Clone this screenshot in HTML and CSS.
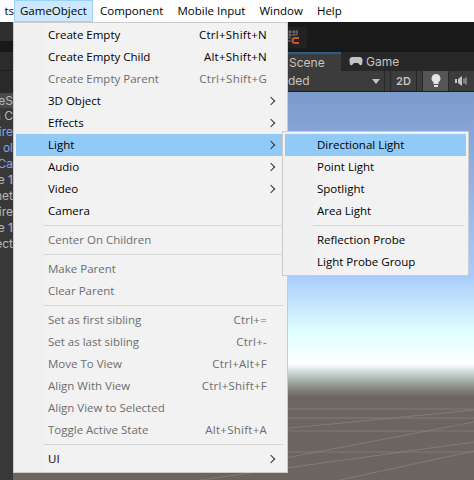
FILE: index.html
```html
<!DOCTYPE html>
<html>
<head>
    <title>GameObject menu</title>
    <meta charset="UTF-8">
    <link rel="stylesheet" href="styles.css">
</head>
<body>
    <div id="menubar">
        <span class="bar_item cut">ts</span>
        <span class="bar_item open">GameObject</span>
        <span class="bar_item">Component</span>
        <span class="bar_item">Mobile Input</span>
        <span class="bar_item">Window</span>
        <span class="bar_item">Help</span>
    </div>
    <div id="editor">
        <div id="toolbar">
            <div class="tool_left"></div>
            <div class="snap">
                <svg width="14" height="16" viewBox="0 0 14 16"><path d="M5 1v7M9 1v5M12 1v5M3 3h10M3 6h9M3 9h3M3 12h3" stroke="#777" fill="none"/><path d="M14 9H10a2.500 2.500 0 0 0 0 5h4" stroke="#c8562a" stroke-width="2" fill="none"/></svg>
            </div>
        </div>
        <div id="work">
            <div id="hierarchy">
                <div class="h_tab"></div>
                <div class="h_search"></div>
                <div class="h_row head">eS</div>
                <div class="h_row">n C</div>
                <div class="h_row blue">hire</div>
                <div class="h_row blue">ol</div>
                <div class="h_row blue">Ca</div>
                <div class="h_row">e 1</div>
                <div class="h_row">net</div>
                <div class="h_row">ire</div>
                <div class="h_row">e 1</div>
                <div class="h_row">ect</div>
            </div>
            <div id="scene_panel">
                <div id="tabs">
                    <span class="tab active">Scene</span>
                    <span class="tab">
                        <svg width="14" height="9" viewBox="0 0 14 9"><path d="M3.500 0h7a3 3 0 0 1 3 3.500l-.4 3.500a1.500 1.500 0 0 1-2.700.6L9 6H5L3.600 7.600A1.500 1.500 0 0 1 .9 7L.5 3.500a3 3 0 0 1 3-3.500z" fill="#c4c4c4"/></svg>
                        Game
                    </span>
                </div>
                <div id="scene_tools">
                    <span class="shaded">ded</span>
                    <span class="caret"></span>
                    <span class="tool gap"></span>
                    <span class="tool twod">2D</span>
                    <span class="tool gap"></span>
                    <span class="tool on">
                        <svg width="10" height="16" viewBox="0 0 10 16"><path d="M5 1a4.500 4.500 0 0 0-2.500 8.200V11h5V9.200A4.500 4.500 0 0 0 5 1z" fill="#e4e4e4"/><rect x="3" y="12" width="4" height="2" fill="#e4e4e4"/></svg>
                    </span>
                    <span class="tool last">
                        <svg width="14" height="12" viewBox="0 0 14 12"><path d="M0 4h2v4H0zM3 4l4-3v10L3 8z" fill="#c4c4c4"/><path d="M9 3.500v5M11 2.500v7" stroke="#c4c4c4" fill="none"/></svg>
                    </span>
                </div>
                <div id="sky">
                    <svg class="grid" width="474" height="85" viewBox="0 0 474 85">
                        <path d="M0 57H474M0 36H474M0 23H474M0 14H474M280 64L474 27M200 85L474 47M340 85L474 56M280 34L474 15" stroke="#8a8580" fill="none" opacity="0.7"/>
                    </svg>
                </div>
            </div>
        </div>
    </div>

    <div class="menu main_menu">
        <div class="item"><span>Create Empty</span><span class="keys">Ctrl+Shift+N</span></div>
        <div class="item"><span>Create Empty Child</span><span class="keys">Alt+Shift+N</span></div>
        <div class="item off"><span>Create Empty Parent</span><span class="keys">Ctrl+Shift+G</span></div>
        <div class="item sub"><span>3D Object</span></div>
        <div class="item sub"><span>Effects</span></div>
        <div class="item sub hot"><span>Light</span></div>
        <div class="item sub"><span>Audio</span></div>
        <div class="item sub"><span>Video</span></div>
        <div class="item"><span>Camera</span></div>
        <div class="sep"></div>
        <div class="item off"><span>Center On Children</span></div>
        <div class="sep"></div>
        <div class="item off"><span>Make Parent</span></div>
        <div class="item off"><span>Clear Parent</span></div>
        <div class="sep"></div>
        <div class="item off"><span>Set as first sibling</span><span class="keys">Ctrl+=</span></div>
        <div class="item off"><span>Set as last sibling</span><span class="keys">Ctrl+-</span></div>
        <div class="item off"><span>Move To View</span><span class="keys">Ctrl+Alt+F</span></div>
        <div class="item off"><span>Align With View</span><span class="keys">Ctrl+Shift+F</span></div>
        <div class="item off"><span>Align View to Selected</span></div>
        <div class="item off"><span>Toggle Active State</span><span class="keys">Alt+Shift+A</span></div>
        <div class="sep"></div>
        <div class="item sub"><span>UI</span></div>
    </div>

    <div class="menu light_menu">
        <div class="item hot"><span>Directional Light</span></div>
        <div class="item"><span>Point Light</span></div>
        <div class="item"><span>Spotlight</span></div>
        <div class="item"><span>Area Light</span></div>
        <div class="sep"></div>
        <div class="item"><span>Reflection Probe</span></div>
        <div class="item"><span>Light Probe Group</span></div>
    </div>
</body>
</html>
```
FILE: styles.css
```css
html, body {
    height: 100%;
}
body {
    margin: 0;
    overflow: hidden;
    display: flex;
    flex-direction: column;
    background-color: #383838;
    font-family: "Open Sans", "Noto Sans", sans-serif;
    font-size: 11.5px;
    color: #000;
}
#menubar {
    height: 22px;
    flex: none;
    display: flex;
    background-color: #fff;
}
.bar_item {
    padding: 0 7px;
    line-height: 22px;
    box-sizing: border-box;
    white-space: nowrap;
}
.bar_item.cut {
    width: 14px;
    padding: 0;
    direction: rtl;
    overflow: hidden;
}
.bar_item.open {
    width: 79px;
    background-color: #cce8ff;
    border: 1px solid #99d1ff;
    line-height: 20px;
    padding: 0 5px;
}
#editor {
    flex: 1;
    display: flex;
    flex-direction: column;
    min-height: 0;
}
#toolbar {
    height: 30px;
    flex: none;
    display: flex;
    justify-content: flex-end;
    align-items: center;
    padding-right: 167px;
    background-color: #191919;
}
.tool_left {
    width: 13px;
    height: 19px;
    margin-right: auto;
    align-self: flex-start;
    background-color: #2e2e2e;
}
.snap {
    width: 28px;
    height: 21px;
    display: flex;
    justify-content: flex-end;
    align-items: center;
    padding-right: 8px;
    box-sizing: border-box;
    border-radius: 3px;
    background-color: #222;
}
#work {
    flex: 1;
    display: flex;
    min-height: 0;
}
#hierarchy {
    width: 13px;
    flex: none;
    overflow: hidden;
    white-space: nowrap;
    direction: rtl;
    font-family: Inter, sans-serif;
    font-size: 12px;
    color: #b8b8b8;
    background-color: #383838;
}
.h_tab {
    height: 18px;
    background-color: #2b2b2b;
    border-bottom: 1px solid #1e1e1e;
}
.h_search {
    height: 22px;
    background-color: #2a2a2a;
}
.h_row {
    height: 16px;
    line-height: 16px;
}
.h_row.head {
    height: 15px;
    line-height: 15px;
    background-color: #4a4a4a;
}
.h_row.blue {
    color: #7ca7e8;
}
#scene_panel {
    flex: 1;
    display: flex;
    flex-direction: column;
    font-family: Inter, sans-serif;
    font-size: 12px;
}
#tabs {
    height: 19px;
    flex: none;
    display: flex;
    padding-left: 275px;
    background-color: #282828;
    color: #c4c4c4;
}
.tab {
    display: flex;
    align-items: center;
    gap: 3px;
    padding: 0 8px;
    box-sizing: border-box;
}
.tab.active {
    width: 53px;
    padding: 0 1px;
    background-color: #3c3c3c;
    border-top: 2px solid #2c5d87;
}
#scene_tools {
    height: 21px;
    flex: none;
    display: flex;
    align-items: stretch;
    padding-left: 275px;
    box-sizing: border-box;
    background-color: #3c3c3c;
    border-bottom: 1px solid #1e1e1e;
    color: #c4c4c4;
}
.shaded {
    width: 84px;
    line-height: 20px;
}
.caret {
    width: 0;
    height: 0;
    align-self: center;
    margin-right: 4px;
    border-left: 4px solid transparent;
    border-right: 4px solid transparent;
    border-top: 5px solid #c4c4c4;
}
.tool {
    display: flex;
    align-items: center;
    justify-content: center;
    box-sizing: border-box;
    border-left: 1px solid #282828;
}
.tool.gap {
    width: 6px;
}
.tool.twod {
    width: 26px;
    font-weight: 600;
    font-size: 11px;
}
.tool.on {
    width: 26px;
    background-color: #555;
}
.tool.last {
    width: 26px;
}
#sky {
    flex: 1;
    position: relative;
    overflow: hidden;
    background: linear-gradient(to bottom, #7b9bcd 0, #a8ccfb 184px, #dfffff 240px, #ffffff 272px, #cbdad6 280px, #85867f 297px, #6c6661 305px, #6b6460 100%);
}
.grid {
    position: absolute;
    left: -13px;
    bottom: 0;
}
.menu {
    position: absolute;
    box-sizing: border-box;
    padding: 2px;
    background: linear-gradient(to right, #f0f0f0 31px, #f2f2f2 31px);
    border: 1px solid #ccc;
}
.main_menu {
    left: 13px;
    top: 22px;
    width: 275px;
    height: 451px;
    padding-top: 1px;
}
.light_menu {
    left: 282px;
    top: 131px;
    width: 187px;
}
.item {
    height: 22px;
    display: flex;
    justify-content: space-between;
    align-items: center;
    padding: 0 18px 1px 32px;
    box-sizing: border-box;
    white-space: nowrap;
}
.keys {
    letter-spacing: 0.25px;
}
.item.hot {
    background-color: #91c9f7;
}
.item.off {
    color: #6d6d6d;
}
.item.sub {
    position: relative;
}
.item.sub::after {
    content: "";
    position: absolute;
    right: 11px;
    top: 8px;
    width: 5px;
    height: 5px;
    border-top: 1px solid #333;
    border-right: 1px solid #333;
    transform: rotate(45deg);
}
.sep {
    height: 1px;
    margin: 3px 2px 3px 28px;
    background-color: #d7d7d7;
}
```
